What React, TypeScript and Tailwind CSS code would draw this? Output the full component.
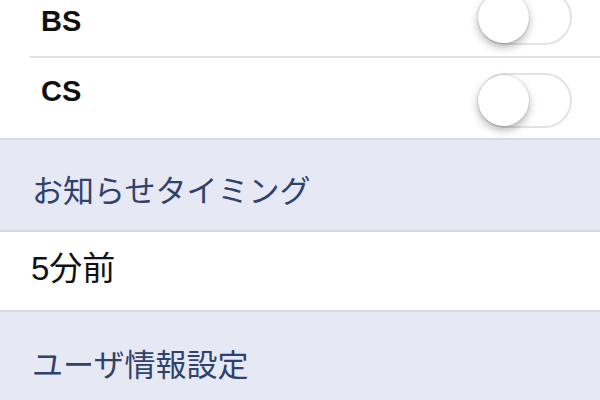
import React from 'react';

const Toggle: React.FC = () => (
  <div className="relative h-[55px] w-[94px] shrink-0 rounded-full border-2 border-[#e3e3e5] bg-white">
    <div className="absolute left-[-2px] top-[0px] h-[51px] w-[51px] rounded-full bg-white shadow-[0_4px_8px_rgba(0,0,0,0.3),0_0_0_1px_rgba(0,0,0,0.07)]" />
  </div>
);

const SwitchRow: React.FC<{ label: string; textShift: string; toggleShift: string; last?: boolean }> = ({
  label,
  textShift,
  toggleShift,
  last,
}) => (
  <div className={`bg-white pl-[30px] ${last ? 'border-b-2 border-[#d7d9de]' : ''}`}>
    <div className={`flex h-[80px] items-center justify-between pr-[28px] ${last ? '' : 'border-b-2 border-[#e2e3e6]'}`}>
      <span className={`pl-[11px] text-[29px] font-bold leading-[32px] text-[#111] ${textShift}`}>{label}</span>
      <div className={toggleShift}>
        <Toggle />
      </div>
    </div>
  </div>
);

const SectionHeader: React.FC<{ title: string; height: string }> = ({ title, height }) => (
  <div className={`flex items-center bg-[#e6e9f4] pl-[32px] ${height}`}>
    <span className="text-[31px] leading-[40px] text-[#2f416d]">{title}</span>
  </div>
);

export default function App() {
  return (
    <div
      className="h-[400px] w-[600px] overflow-hidden bg-white"
      style={{ fontFamily: '"Liberation Sans", "Noto Sans CJK JP", sans-serif' }}
    >
      <div className="-mt-[22px]">
        <SwitchRow label="BS" textShift="translate-y-[4px]" toggleShift="translate-y-[0px]" />
        <SwitchRow label="CS" textShift="-translate-y-[7px]" toggleShift="translate-y-[2px]" last />
        <SectionHeader title="お知らせタイミング" height="h-[90px] pt-[14px]" />
        <div className="flex h-[82px] items-center border-y-2 border-[#d7d9de] bg-white pl-[31px]">
          <span className="text-[33px] leading-[40px] text-[#111] -translate-y-[2px]">5分前</span>
        </div>
        <SectionHeader title="ユーザ情報設定" height="h-[100px] pt-[8px]" />
      </div>
    </div>
  );
}
